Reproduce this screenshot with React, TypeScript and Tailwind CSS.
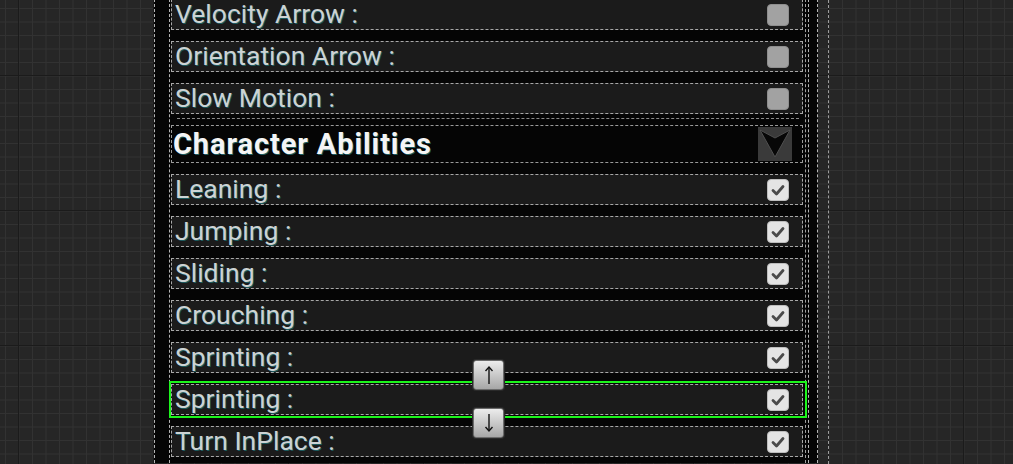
import React from "react";

const rowsTop = ["Velocity Arrow :", "Orientation Arrow :", "Slow Motion :"];
const rowsBottom = ["Leaning :", "Jumping :", "Sliding :", "Crouching :", "Sprinting :", "Sprinting :", "Turn InPlace :"];

function CheckBox({ checked }: { checked: boolean }) {
  if (!checked) {
    return <div className="w-[22px] h-[22px] rounded-[4px] bg-[#a2a2a2] border border-[#8e8e8e]" />;
  }
  return (
    <div className="w-[22px] h-[22px] rounded-[4px] bg-[#e4e4e4] border border-[#bdbdbd] flex items-center justify-center">
      <svg width="16" height="16" viewBox="0 0 16 16">
        <path d="M3 8.5 L6.5 12 L13 4.5" fill="none" stroke="#4a4a4a" strokeWidth="2.8" strokeLinecap="round" strokeLinejoin="round" />
      </svg>
    </div>
  );
}

function ArrowButton({ dir }: { dir: "up" | "down" }) {
  const pos = dir === "up" ? "top-[-25px]" : "top-[23px]";
  return (
    <div className={`absolute z-10 ${pos} left-[301px] w-[31px] h-[30px] rounded-[3px] border border-[#6b6b6b] bg-[linear-gradient(#ececec,#a6a6a6)] flex items-center justify-center shadow-[0_0_0_1px_#2a2a2a]`}>
      <svg width="16" height="22" viewBox="0 0 16 22">
        {dir === "up" ? (
          <>
            <line x1="8" y1="3" x2="8" y2="20" stroke="#111" strokeWidth="1.4" />
            <polyline points="4.5,7 8,3 11.5,7" fill="none" stroke="#111" strokeWidth="1.4" />
          </>
        ) : (
          <>
            <line x1="8" y1="2" x2="8" y2="19" stroke="#111" strokeWidth="1.4" />
            <polyline points="4.5,15 8,19 11.5,15" fill="none" stroke="#111" strokeWidth="1.4" />
          </>
        )}
      </svg>
    </div>
  );
}

function Row({ label, checked, selected }: { label: string; checked: boolean; selected?: boolean }) {
  return (
    <div className={`relative h-[31px] w-[632px] shrink-0 bg-[#1b1b1b] border border-dashed border-[#a8a8a8] flex items-center pl-[3px] pr-[13px] ${selected ? "z-10" : ""}`}>
      <span className="flex-1 text-[26.5px] leading-[25px] pb-[2px] text-[#ccd3d4] [text-shadow:1px_1px_0_#1d5a5e]">{label}</span>
      <CheckBox checked={checked} />
      {selected && (
        <>
          <div className="absolute top-[-4px] bottom-[-4px] left-[-3px] right-[-5px] border-2 border-[#1cf51c] pointer-events-none" />
          <ArrowButton dir="up" />
          <ArrowButton dir="down" />
        </>
      )}
    </div>
  );
}

function ExpandIcon() {
  return (
    <svg width="34" height="34" viewBox="0 0 34 34">
      <rect x="0" y="0" width="34" height="34" fill="#3a3a3a" />
      <polygon points="2,3 17,11 32,3 17,30" fill="#070707" stroke="#4f4f4f" strokeWidth="1" />
    </svg>
  );
}

export default function App() {
  return (
    <div
      className="w-[1013px] h-[464px] overflow-hidden flex pl-[154px] bg-[#262626] [background-image:linear-gradient(#1b1b1b_1px,transparent_1px),linear-gradient(90deg,#1b1b1b_1px,transparent_1px),linear-gradient(#323232_1px,transparent_1px),linear-gradient(90deg,#323232_1px,transparent_1px)] [background-size:135px_135px,135px_135px,13.5px_13.5px,13.5px_13.5px] [background-position:0_75px,18px_0,0_8px,5px_0]"
      style={{ fontFamily: "Roboto, 'Noto Sans', sans-serif" }}
    >
      <div className="w-[675px] h-full border-r border-dashed border-[#9d9d9d] shrink-0">
        <div className="w-[664px] h-full bg-[#050505] border-x border-dashed border-[#b5b5b5] pl-[14px]">
          <div className="w-[640px] h-full border-x border-dashed border-[#b5b5b5] pl-[1px]">
            <div className="w-[635px] h-full border-r border-dashed border-[#a0a0a0] flex flex-col gap-[11px] -mt-[1px]">
              {rowsTop.map((r) => (
                <Row key={r} label={r} checked={false} />
              ))}
              <div className="relative h-[38px] w-[632px] shrink-0 border border-dashed border-[#9a9a9a] bg-[#050505] flex items-center pl-[1px] pr-[10px]">
                <div className="absolute top-[-8px] left-[5px] right-[3px] border-t border-dashed border-[#8a8a8a]" />
                <span className="flex-1 text-[29px] font-bold leading-none tracking-[0.9px] text-[#f5f5f5] [text-shadow:1px_1px_0_#1d5a5e]">
                  Character Abilities
                </span>
                <ExpandIcon />
              </div>
              {rowsBottom.map((r, i) => (
                <Row key={r + i} label={r} checked={true} selected={i === 5} />
              ))}
            </div>
          </div>
        </div>
      </div>
    </div>
  );
}
